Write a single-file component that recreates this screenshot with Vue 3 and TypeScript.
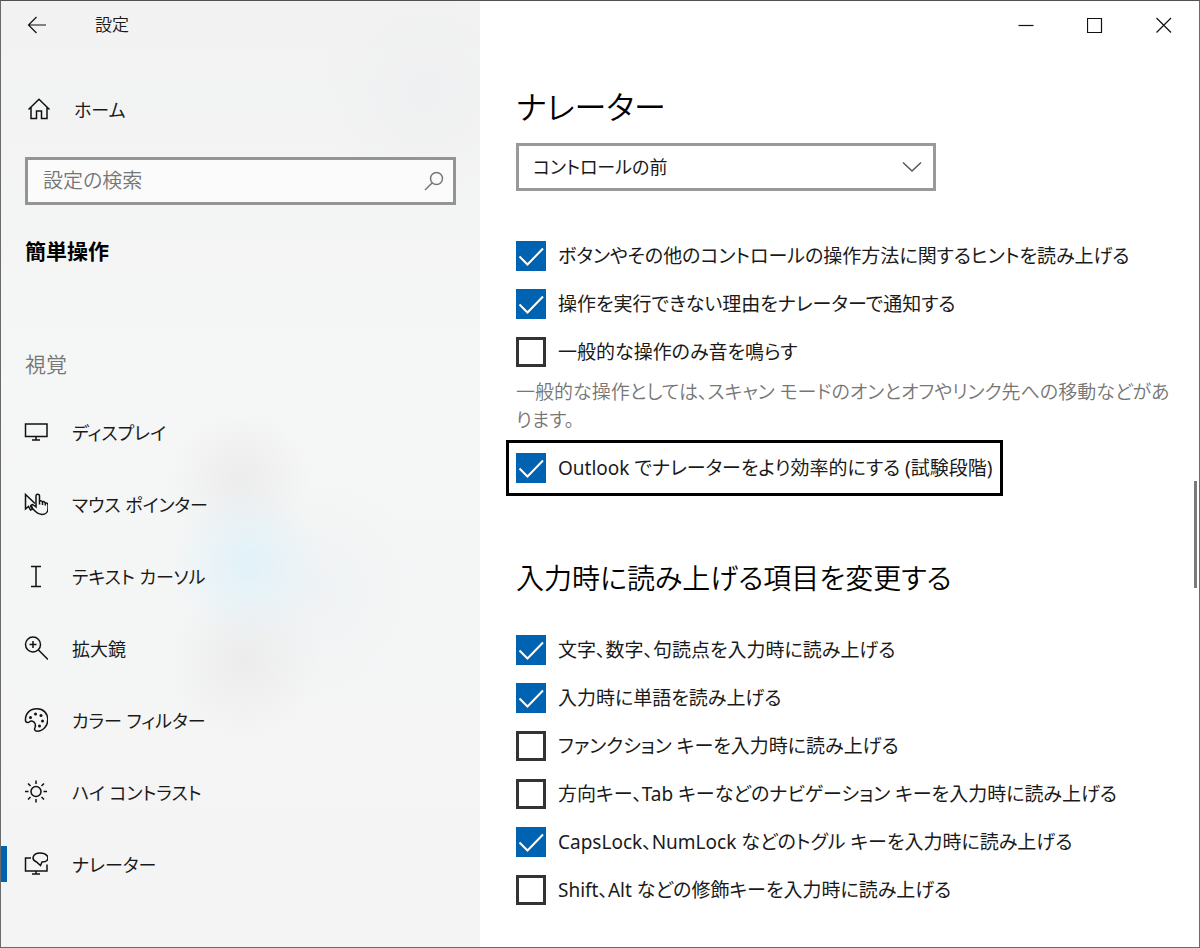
<script setup lang="ts">
import { ref } from 'vue'

interface NavItem {
  id: string
  label: string
}

interface CheckOption {
  id: string
  label: string
  checked: boolean
}

const navItems: NavItem[] = [
  { id: 'display', label: 'ディスプレイ' },
  { id: 'pointer', label: 'マウス ポインター' },
  { id: 'cursor', label: 'テキスト カーソル' },
  { id: 'magnifier', label: '拡大鏡' },
  { id: 'filter', label: 'カラー フィルター' },
  { id: 'contrast', label: 'ハイ コントラスト' },
  { id: 'narrator', label: 'ナレーター' },
]
const current = ref('narrator')
const query = ref('')
const timing = ref('before')

const hints = ref<CheckOption[]>([
  { id: 'hint', label: 'ボタンやその他のコントロールの操作方法に関するヒントを読み上げる', checked: true },
  { id: 'reason', label: '操作を実行できない理由をナレーターで通知する', checked: true },
  { id: 'sound', label: '一般的な操作のみ音を鳴らす', checked: false },
])
const outlook = ref(true)
const typing = ref<CheckOption[]>([
  { id: 'chars', label: '文字、数字、句読点を入力時に読み上げる', checked: true },
  { id: 'words', label: '入力時に単語を読み上げる', checked: true },
  { id: 'function', label: 'ファンクション キーを入力時に読み上げる', checked: false },
  { id: 'arrows', label: '方向キー、Tab キーなどのナビゲーション キーを入力時に読み上げる', checked: false },
  { id: 'toggle', label: 'CapsLock、NumLock などのトグル キーを入力時に読み上げる', checked: true },
  { id: 'modifier', label: 'Shift、Alt などの修飾キーを入力時に読み上げる', checked: false },
])
</script>

<template>
  <div class="window">
    <aside class="sidebar">
      <header class="titlebar">
        <button class="back" type="button" aria-label="戻る">
          <svg width="20" height="18" viewBox="0 0 20 18"><path d="M19 9H1.5M9.5 1L1.5 9l8 8" /></svg>
        </button>
        <span class="app-name">設定</span>
      </header>

      <a class="home" href="#home">
        <svg width="24" height="24" viewBox="0 0 24 24">
          <path d="M1.5 12.5L12 2.200L22.500 12.500M4 10.500V21.500H9.500V14H14.500V21.500H20V10.500" />
        </svg>
        <span>ホーム</span>
      </a>

      <div class="search">
        <input v-model="query" type="text" placeholder="設定の検索" aria-label="設定の検索" />
        <svg width="20" height="20" viewBox="0 0 20 20"><circle cx="12.500" cy="7.500" r="6" /><path d="M8.300 11.700L1 19" /></svg>
      </div>

      <h2 class="category">簡単操作</h2>
      <h3 class="group">視覚</h3>

      <nav class="nav">
        <a
          v-for="item in navItems"
          :key="item.id"
          :href="'#' + item.id"
          :class="['nav-item', { active: item.id === current }]"
          @click="current = item.id"
        >
          <svg v-if="item.id === 'display'" width="24" height="24" viewBox="0 0 24 24">
            <path d="M1.500 4H23V16.500H1.500ZM12 16.500V20M8 20H16" />
          </svg>
          <svg v-else-if="item.id === 'pointer'" width="24" height="24" viewBox="0 0 24 24">
            <path d="M11 11.500L1.500 2.500V17L4.500 14.500L6.500 18L8.500 17L7.500 13.500" />
            <path d="M12 15V4C12 1.500 15.500 1.500 15.500 4V9.500C16 8.500 18.500 8.500 18.500 10.500C19 9 21.300 9.500 21.300 11.500C21.800 10.500 24 11 24 13V16.500C24 20 21.500 22.500 18 22.500C15 22.500 13 21 11.500 19.500L7 15C6 13.500 8 12 9.500 13ZM15.500 9.500V12.500M18.500 10.500V13M21.300 11.500V13.500" />
          </svg>
          <svg v-else-if="item.id === 'cursor'" width="24" height="24" viewBox="0 0 24 24">
            <path d="M7 2.500H17M12 2.500V22.500M7 22.500H17" />
          </svg>
          <svg v-else-if="item.id === 'magnifier'" width="24" height="24" viewBox="0 0 24 24">
            <circle cx="9" cy="8.500" r="7.500" /><path d="M14.500 14L24 23.500M9 5V12M5.500 8.500H12.500" />
          </svg>
          <svg v-else-if="item.id === 'filter'" width="24" height="24" viewBox="0 0 24 24">
            <path d="M1.500 12.500C1 5 6.500 .8 13 .8C19.500 .8 23.800 5.500 23.800 11.500C23.800 18 19 23.200 13 23.200C11 23.200 10 21.500 11 19.500C12 17 11 13.500 8 13C6 12.500 5.500 14.500 4 14.500C2.500 14.500 1.500 13.500 1.500 12.500Z" />
            <g class="dots">
              <circle cx="6.500" cy="9.500" r="1.500" /><circle cx="11.500" cy="6" r="1.500" />
              <circle cx="17" cy="7.500" r="1.500" /><circle cx="18.500" cy="13" r="1.500" />
              <circle cx="15.500" cy="18" r="1.500" />
            </g>
          </svg>
          <svg v-else-if="item.id === 'contrast'" width="24" height="24" viewBox="0 0 24 24">
            <circle cx="12" cy="11.500" r="5" />
            <path d="M12 .5V4M12 19V22.500M1 11.500H4.500M19.500 11.500H23M4 3.500L6.500 6M17.500 17L20 19.500M4 19.500L6.500 17M17.500 6L20 3.500" />
          </svg>
          <svg v-else width="24" height="24" viewBox="0 0 24 24">
            <path d="M7 6H1.500V19H23V12.500M12 19V22M8 22H16" />
            <path d="M12.500 10C6.500 7.500 9 1 16 1C22.500 1 25.500 5 23 8.500C21.500 10 19.500 10 18 10L16.500 13.500Z" />
          </svg>
          <span>{{ item.label }}</span>
        </a>
      </nav>
    </aside>

    <main class="main">
      <header class="controls">
        <button type="button" aria-label="最小化">
          <svg width="16" height="16" viewBox="0 0 16 16"><path d="M.5 8.500H15.500" /></svg>
        </button>
        <button type="button" aria-label="最大化">
          <svg width="16" height="16" viewBox="0 0 16 16"><path d="M.5 1.500H14.500V15.500H.5Z" /></svg>
        </button>
        <button type="button" aria-label="閉じる">
          <svg width="16" height="16" viewBox="0 0 16 16"><path d="M.5 1L15 15.500M15 1L.5 15.500" /></svg>
        </button>
      </header>

      <div class="content">
        <h1>ナレーター</h1>

        <div class="select">
          <select v-model="timing" aria-label="読み上げるタイミング">
            <option value="before">コントロールの前</option>
            <option value="after">コントロールの後</option>
          </select>
          <svg width="20" height="12" viewBox="0 0 20 12"><path d="M1 1.500L10 10L19 1.500" /></svg>
        </div>

        <div class="checks">
          <label v-for="option in hints" :key="option.id" class="check">
            <span class="box">
              <input v-model="option.checked" type="checkbox" />
              <svg width="30" height="30" viewBox="0 0 30 30"><path d="M3.500 15.500L11.500 23.500L27 7.500" /></svg>
            </span>
            <span>{{ option.label }}</span>
          </label>
        </div>

        <p class="note">一般的な操作としては、スキャン モードのオンとオフやリンク先への移動などがあります。</p>

        <label class="check focused">
          <span class="box">
            <input v-model="outlook" type="checkbox" />
            <svg width="30" height="30" viewBox="0 0 30 30"><path d="M3.500 15.500L11.500 23.500L27 7.500" /></svg>
          </span>
          <span>Outlook でナレーターをより効率的にする (試験段階)</span>
        </label>

        <h2>入力時に読み上げる項目を変更する</h2>

        <div class="checks">
          <label v-for="option in typing" :key="option.id" class="check">
            <span class="box">
              <input v-model="option.checked" type="checkbox" />
              <svg width="30" height="30" viewBox="0 0 30 30"><path d="M3.500 15.500L11.500 23.500L27 7.500" /></svg>
            </span>
            <span>{{ option.label }}</span>
          </label>
        </div>
      </div>
    </main>
    <div class="scroll-thumb"></div>
  </div>
</template>

<style>
body {
  margin: 0;
}
</style>

<style scoped>
.window,
.window * {
  box-sizing: border-box;
}

.window {
  position: relative;
  display: flex;
  min-height: 100vh;
  border: 1px solid #6a6a6a;
  border-top-color: #505050;
  background: #fff;
  color: #1a1a1a;
  font-family: "Noto Sans", "Noto Sans CJK JP", sans-serif;
  font-size: 19px;
  font-weight: 400;
  line-height: 28px;
  font-feature-settings: "palt", "kern";
}

h1,
h2,
h3,
p {
  margin: 0;
  font-weight: 350;
}

svg {
  flex: none;
  fill: none;
  stroke: #111;
  stroke-width: 1.5;
}

button {
  display: flex;
  align-items: center;
  justify-content: center;
  padding: 0;
  border: 0;
  background: none;
}

button svg {
  stroke-width: 1.2;
}

input,
select {
  margin: 0;
  font: inherit;
  font-feature-settings: inherit;
  color: inherit;
  appearance: none;
  border-radius: 0;
}

a {
  color: inherit;
  text-decoration: none;
}

.sidebar {
  flex: 0 0 479px;
  background:
    radial-gradient(circle at 245px 562px, #e1f2f9 0, rgba(225, 242, 249, 0.6) 30px, rgba(225, 242, 249, 0) 76px),
    radial-gradient(circle at 240px 480px, #ececec 0, rgba(236, 236, 236, 0) 70px),
    radial-gradient(circle at 243px 660px, #ececec 0, rgba(236, 236, 236, 0) 76px),
    radial-gradient(circle at 310px 590px, #eff2f4 0, rgba(239, 242, 244, 0) 110px),
    radial-gradient(circle at 425px 90px, #eff0f1 0, rgba(239, 240, 241, 0) 110px),
    linear-gradient(#f2f2f2, #f5f6f6 40%, #f4f4f4);
}

.titlebar {
  display: flex;
  align-items: center;
  height: 48px;
}

.back {
  width: 72px;
  height: 48px;
}

.app-name {
  margin-left: 22px;
  font-size: 17px;
  font-weight: 350;
}

.home {
  display: flex;
  align-items: center;
  gap: 23px;
  height: 48px;
  margin-top: 36px;
  padding-left: 26px;
  font-size: 18px;
}

.home span,
.nav-item span {
  padding-top: 2px;
}

.search {
  display: flex;
  align-items: center;
  height: 48px;
  margin: 24px 24px 0;
  padding: 0 9px 0 15px;
  border: 3px solid #949494;
  background: #fbfbfb;
  font-size: 20px;
  font-weight: 350;
}

.search input {
  flex: 1;
  min-width: 0;
  padding: 0;
  border: 0;
  outline: 0;
  background: none;
}

.search input::placeholder {
  color: #767676;
  opacity: 1;
}

.search svg {
  stroke: #767676;
}

.category {
  margin: 32px 24px 0;
  color: #000;
  font-size: 21px;
  font-weight: 700;
}

.group {
  margin: 85px 24px 0;
  color: #767676;
  font-size: 21px;
}

.nav {
  margin-top: 18px;
}

.nav-item {
  display: flex;
  align-items: center;
  gap: 24px;
  height: 72px;
  padding-left: 23px;
  font-size: 18px;
}

.nav-item.active {
  background: linear-gradient(#0063b1, #0063b1) left center / 6px 36px no-repeat;
}

.dots {
  fill: #111;
  stroke: none;
}

.main {
  flex: 1;
  min-width: 0;
}

.controls {
  display: flex;
  justify-content: flex-end;
  height: 48px;
  padding-right: 1px;
}

.controls button {
  width: 69px;
  height: 48px;
}

.content {
  padding: 36px 26px 36px 36px;
}

h1 {
  color: #000;
  font-size: 32px;
  line-height: 44px;
}

.select {
  display: grid;
  align-items: center;
  width: 420px;
  max-width: 100%;
  margin-top: 14px;
  font-size: 18px;
}

.select select,
.select svg {
  grid-area: 1 / 1;
}

.select select {
  height: 48px;
  padding: 0 48px 0 14px;
  border: 3px solid #999;
  background: #fff;
}

.select svg {
  justify-self: end;
  margin-right: 14px;
  pointer-events: none;
  stroke: #555;
}

.checks {
  display: flex;
  flex-direction: column;
  align-items: flex-start;
  gap: 18px;
  margin-top: 50px;
}

.check {
  display: flex;
  align-items: center;
  gap: 12px;
  min-height: 30px;
}

.box {
  display: grid;
  flex: none;
}

.box input,
.box svg {
  grid-area: 1 / 1;
}

.box input {
  width: 30px;
  height: 30px;
  border: 3px solid #333;
  background: #fff;
}

.box input:checked {
  border-color: #0063b1;
  background: #0063b1;
}

.box svg {
  visibility: hidden;
  pointer-events: none;
  stroke: #fff;
  stroke-width: 2;
}

.box input:checked + svg {
  visibility: visible;
}

.note {
  margin-top: 11px;
  color: #767676;
}

.focused {
  width: fit-content;
  margin: 6px 0 0 -10px;
  padding: 10px 7px;
  border: 3px solid #000;
}

.content h2 {
  margin-top: 62px;
  color: #000;
  font-size: 28px;
  line-height: 40px;
}

.content h2 + .checks {
  margin-top: 37px;
}

.scroll-thumb {
  position: absolute;
  top: 480px;
  right: 2px;
  width: 3px;
  height: 107px;
  background: #7a7a7a;
}
</style>
